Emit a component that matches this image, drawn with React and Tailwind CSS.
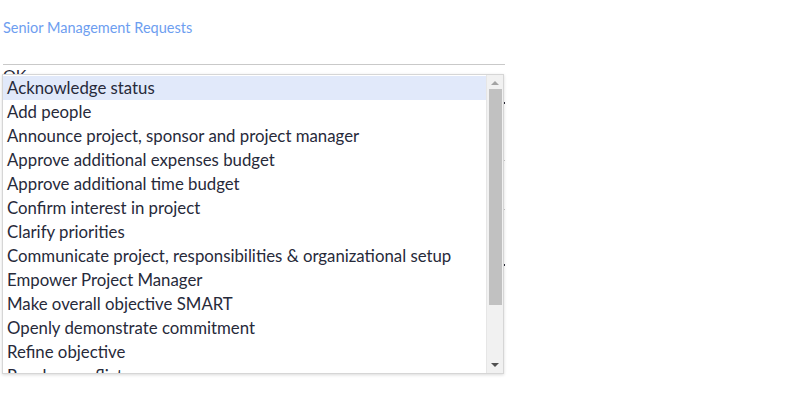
import React from "react";

const requests = [
  "Acknowledge status",
  "Add people",
  "Announce project, sponsor and project manager",
  "Approve additional expenses budget",
  "Approve additional time budget",
  "Confirm interest in project",
  "Clarify priorities",
  "Communicate project, responsibilities & organizational setup",
  "Empower Project Manager",
  "Make overall objective SMART",
  "Openly demonstrate commitment",
  "Refine objective",
  "Resolve conflicts",
];

const App = () => {
  return (
    <div className="w-[800px] h-[396px] bg-white font-['Lato','Liberation_Sans',sans-serif] text-[#272a3a] overflow-hidden">
      {/* Header */}
      <div className="pl-[3px] pt-[18px] h-[64px]">
        <h1 className="text-[14.5px] leading-[20px] text-[#6d9ef0]">Senior Management Requests</h1>
      </div>

      {/* Form underneath the open dropdown */}
      <div className="relative ml-[3px] w-[502px] border-t border-[#c9c9c9]">
        <div className="text-[16px] leading-[20px]">OK</div>
        <div className="h-[19px] border-b-2 border-[#2b2b38] w-full" />
        <div className="h-[57px] border-b border-[#c8c8c8] w-full" />
        <div className="h-[49px] border-b border-[#c8c8c8] w-full" />
        <div className="h-[56px] border-b-2 border-[#2b2b38] w-full" />

        {/* Open listbox */}
        <div className="absolute left-[-1px] top-[9px] w-[502px] h-[300px] flex bg-white border border-[#d6d6d6] shadow-[0_1px_3px_rgba(0,0,0,0.15)] overflow-hidden">
          <ul className="flex-1 pt-[1px]">
            {requests.map((r, i) => (
              <li
                key={r}
                className={`h-[24px] pl-[4px] text-[16.8px] leading-[24px] whitespace-nowrap ${
                  i === 0 ? "bg-[#e1e9fa]" : ""
                }`}
              >
                {r}
              </li>
            ))}
          </ul>
          {/* Scrollbar */}
          <div className="w-[17px] bg-[#f1f1f1] border-l border-[#e6e6e6] flex flex-col items-center">
            <div className="h-[14px] flex items-center justify-center pt-[2px]">
              <div className="w-0 h-0 border-l-[4px] border-r-[4px] border-b-[4px] border-l-transparent border-r-transparent border-b-[#a3a3a3]" />
            </div>
            <div className="w-[13px] h-[216px] bg-[#c1c1c1]" />
            <div className="flex-1" />
            <div className="h-[14px] flex items-center justify-center pb-[2px]">
              <div className="w-0 h-0 border-l-[4px] border-r-[4px] border-t-[4px] border-l-transparent border-r-transparent border-t-[#505050]" />
            </div>
          </div>
        </div>
      </div>
    </div>
  );
};

export default App;
